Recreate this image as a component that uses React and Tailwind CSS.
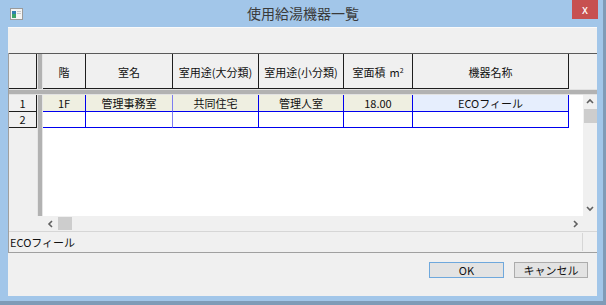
const FONT = { fontFamily: '"MS UI Gothic", "Noto Sans CJK JP", "Noto Sans", sans-serif' };

const COLS = [
  { label: "階", w: "w-[43px]", value: "1F" },
  { label: "室名", w: "w-[87px]", value: "管理事務室", soft: true },
  { label: "室用途(大分類)", w: "w-[86px]", value: "共同住宅" },
  { label: "室用途(小分類)", w: "w-[85px]", value: "管理人室" },
  { label: "室面積", unit: true, w: "w-[69px]", value: "18.00" },
  { label: "機器名称", w: "w-[156px]", value: "ECOフィール", hl: true },
];

function Chevron({ dir }) {
  const d = {
    up: "M1 5 L4 2 L7 5",
    down: "M1 2 L4 5 L7 2",
    left: "M5 1 L2 4 L5 7",
    right: "M2 1 L5 4 L2 7",
  }[dir];
  return (
    <svg width="8" height="8" viewBox="0 0 8 8">
      <path d={d} fill="none" stroke="#606060" strokeWidth="1.6" />
    </svg>
  );
}

function AppIcon() {
  return (
    <svg width="13" height="12" viewBox="0 0 13 12">
      <rect x="0.5" y="0.5" width="12" height="11" fill="#f4f4f4" stroke="#9a9a9a" />
      <rect x="2" y="3" width="4" height="7" fill="#2f7fae" />
      <rect x="2" y="6" width="4" height="4" fill="#3aa46a" />
      <rect x="7" y="3" width="4" height="1" fill="#c8c8c8" />
      <rect x="7" y="5" width="4" height="1" fill="#c8c8c8" />
    </svg>
  );
}

function Splitter() {
  return <div className="w-[6px] shrink-0 border-x border-[#e6e6e6] bg-[#b2b2b2]" />;
}

export default function App() {
  return (
    <div
      className="flex h-[305px] w-[606px] flex-col border-b-[4px] border-r-[3px] border-[#7f9bb7] bg-[#a2c6e9] text-[11px] text-[#111]"
      style={FONT}
    >
      <div className="flex h-[27px] shrink-0">
        <div className="flex w-[34px] items-start pl-[10px] pt-[8px]">
          <AppIcon />
        </div>
        <div className="flex flex-1 items-center justify-center pb-[1px] text-[14px] text-[#3a3a3a]">
          使用給湯機器一覧
        </div>
        <div className="flex w-[31px] items-start">
          <div className="flex h-[19px] w-[26px] items-center justify-center bg-[#c75050] pb-[2px] text-[12px] text-white">
            x
          </div>
        </div>
      </div>

      <div className="ml-[8px] mr-[6px] flex h-[269px] flex-col bg-[#f0f0f0]">
        <div className="h-[26px] shrink-0 border-t border-[#fafafa]" />

        <div className="flex flex-col border-l border-[#a0a0a0]">
          {/* header */}
          <div className="flex h-[36px] border-t border-[#5a5a5a]">
            <div className="w-[28px] border-b border-r border-[#1e1e1e]" />
            <Splitter />
            {COLS.map((c) => (
              <div
                key={c.label}
                className={`${c.w} flex items-center justify-center border-b border-r border-[#1e1e1e] pt-[2px]`}
              >
                {c.label}
                {c.unit && (
                  <span className="ml-[4px]">
                    m<sup className="text-[7px]">2</sup>
                  </span>
                )}
              </div>
            ))}
            <div className="flex-1" />
          </div>

          <div className="h-[6px] border-y border-[#e2e2e2] bg-[#b2b2b2]" />

          {/* body */}
          <div className="flex h-[121px]">
            <div className="flex w-[28px] flex-col">
              <div className="flex h-[17px] items-center justify-center border-b border-r border-[#1e1e1e]">1</div>
              <div className="flex h-[16px] items-center justify-center border-b border-r border-[#1e1e1e]">2</div>
            </div>
            <Splitter />
            <div className="flex w-[540px] flex-col bg-white">
              <div className="flex h-[17px]">
                {COLS.map((c) => (
                  <div
                    key={c.label}
                    className={`${c.w} flex items-center justify-center border-b border-r border-b-[#0000ee] ${
                      c.soft ? "border-r-[#7d7df0]" : "border-r-[#0000ee]"
                    } ${c.hl ? "bg-[#e6eefd]" : "bg-[#efefe1]"}`}
                  >
                    {c.value}
                  </div>
                ))}
              </div>
              <div className="flex h-[16px]">
                {COLS.map((c) => (
                  <div
                    key={c.label}
                    className={`${c.w} border-b border-r border-b-[#0000ee] ${
                      c.soft ? "border-r-[#7d7df0]" : "border-r-[#0000ee]"
                    }`}
                  />
                ))}
              </div>
            </div>
            <div className="flex w-[14px] flex-col items-center bg-[#f0f0f0]">
              <div className="flex h-[14px] items-center justify-center">
                <Chevron dir="up" />
              </div>
              <div className="h-[14px] w-[13px] bg-[#cdcdcd]" />
              <div className="flex-1" />
              <div className="flex h-[14px] items-center justify-center">
                <Chevron dir="down" />
              </div>
            </div>
          </div>

          {/* horizontal scrollbar */}
          <div className="flex h-[15px]">
            <div className="w-[34px]" />
            <div className="flex w-[540px] items-center">
              <div className="flex w-[15px] items-center justify-center">
                <Chevron dir="left" />
              </div>
              <div className="h-[13px] w-[14px] bg-[#cdcdcd]" />
              <div className="flex-1" />
              <div className="flex w-[15px] items-center justify-center">
                <Chevron dir="right" />
              </div>
            </div>
            <div className="w-[14px]" />
          </div>

          {/* status bar */}
          <div className="flex h-[22px] border-b border-t border-b-[#a0a0a0] border-t-[#d6d6d6]">
            <div className="flex flex-1 items-center pl-[1px]">ECOフィール</div>
            <div className="my-[1px] w-[15px] border-l border-[#d6d6d6]" />
          </div>
        </div>

        <div className="flex justify-end gap-[10px] pr-[9px] pt-[9px]">
          <button className="flex h-[16px] w-[75px] items-center justify-center border border-[#6fa8dc] bg-[#e3e3e3]">
            OK
          </button>
          <button className="flex h-[16px] w-[74px] items-center justify-center border border-[#acacac] bg-[#e3e3e3]">
            キャンセル
          </button>
        </div>
      </div>
    </div>
  );
}
